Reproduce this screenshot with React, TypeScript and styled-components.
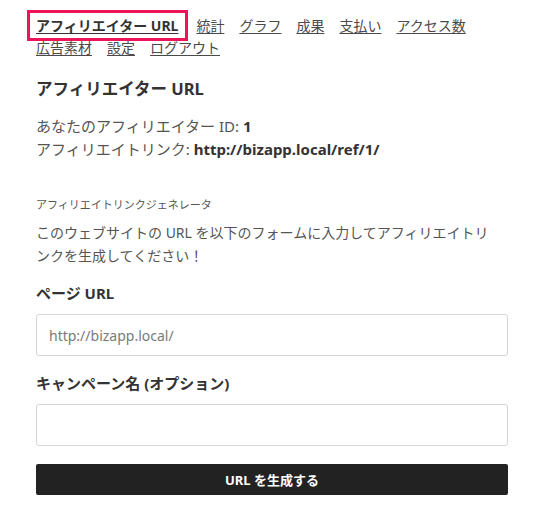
import React from "react";
import styled, { createGlobalStyle } from "styled-components";

const FONT = `"Noto Sans", "Noto Sans CJK JP", sans-serif`;

const GlobalStyle = createGlobalStyle`
  html, body {
    margin: 0;
    padding: 0;
    background: #ffffff;
  }
  body {
    font-family: ${FONT};
    color: #333333;
  }
  * { box-sizing: border-box; }
`;

const Page = styled.div`
  padding: 15px 34px 20px 36px;
`;

const Nav = styled.nav`
  display: flex;
  flex-wrap: wrap;
  column-gap: 15px;
  font-size: 14px;
  line-height: 22px;
`;

const NavLink = styled.a<{ $active?: boolean }>`
  position: relative;
  color: ${(p) => (p.$active ? "#333333" : "#4a4a4a")};
  font-weight: ${(p) => (p.$active ? 700 : 400)};
  text-decoration: underline;
  text-underline-offset: 2px;
  cursor: pointer;
  ${(p) =>
    p.$active
      ? `
    margin-right: 3px;
    &::after {
      content: "";
      position: absolute;
      top: -5px;
      bottom: -4px;
      left: -9px;
      right: -10px;
      border: 3px solid #ee1459;
      pointer-events: none;
    }
  `
      : ""}
`;

const Title = styled.h1`
  margin: 18px 0 0;
  font-size: 16.5px;
  line-height: 24px;
  font-weight: 700;
  color: #333333;
`;

const Info = styled.div`
  margin-top: 14px;
  font-size: 15px;
  line-height: 23px;
  color: #555555;
`;

const Strong = styled.strong`
  font-weight: 700;
  color: #333333;
`;

const SubHeading = styled.h2`
  margin: 35px 0 0;
  font-size: 11px;
  line-height: 18px;
  font-weight: 400;
  color: #555555;
`;

const Paragraph = styled.p`
  margin: 7px 0 0;
  max-width: 460px;
  font-size: 14px;
  line-height: 23px;
  color: #555555;
`;

const Field = styled.div<{ $top: number }>`
  display: flex;
  flex-direction: column;
  margin-top: ${(p) => p.$top}px;
`;

const Label = styled.label`
  font-size: 15px;
  line-height: 22px;
  font-weight: 700;
  color: #333333;
  margin-bottom: 10px;
`;

const Input = styled.input`
  height: 42px;
  width: 100%;
  border: 1px solid #d6d6d6;
  border-radius: 3px;
  padding: 0 12px;
  font-family: ${FONT};
  font-size: 14px;
  color: #333333;
  background: #ffffff;
  outline: none;
  &::placeholder {
    color: #7a7a7a;
  }
`;

const Button = styled.button`
  margin-top: 18px;
  width: 100%;
  height: 31px;
  border: none;
  border-radius: 2px;
  background: #222222;
  color: #ffffff;
  font-family: ${FONT};
  font-size: 13px;
  font-weight: 700;
  cursor: pointer;
`;

const navItems = [
  "アフィリエイター URL",
  "統計",
  "グラフ",
  "成果",
  "支払い",
  "アクセス数",
  "広告素材",
  "設定",
  "ログアウト",
];

export default function App() {
  return (
    <>
      <GlobalStyle />
      <Page>
        <Nav>
          {navItems.map((item, i) => (
            <NavLink key={item} $active={i === 0}>
              {item}
            </NavLink>
          ))}
        </Nav>
        <Title>アフィリエイター URL</Title>
        <Info>
          <div>
            あなたのアフィリエイター ID: <Strong>1</Strong>
          </div>
          <div>
            アフィリエイトリンク: <Strong>http://bizapp.local/ref/1/</Strong>
          </div>
        </Info>
        <SubHeading>アフィリエイトリンクジェネレータ</SubHeading>
        <Paragraph>
          このウェブサイトの URL を以下のフォームに入力してアフィリエイトリンクを生成してください！
        </Paragraph>
        <Field $top={15}>
          <Label>ページ URL</Label>
          <Input placeholder="http://bizapp.local/" />
        </Field>
        <Field $top={16}>
          <Label>キャンペーン名 (オプション)</Label>
          <Input />
        </Field>
        <Button>URL を生成する</Button>
      </Page>
    </>
  );
}
